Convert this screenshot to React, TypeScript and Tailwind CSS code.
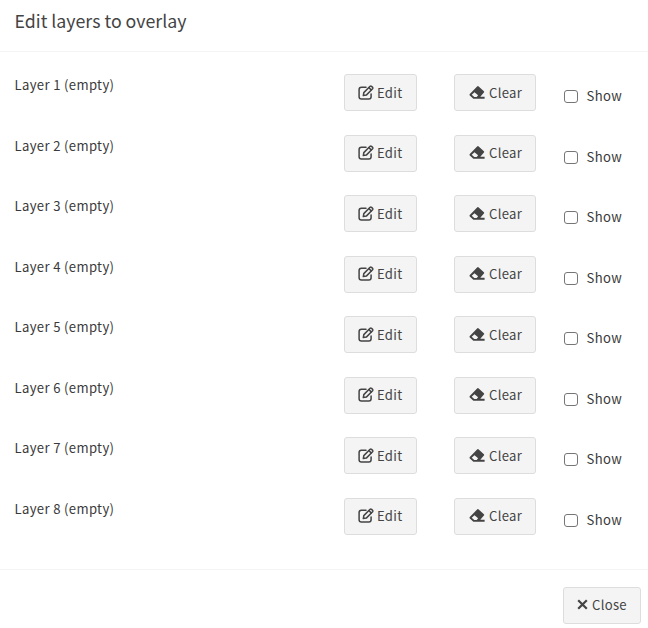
import React from "react";

const layers = [1, 2, 3, 4, 5, 6, 7, 8];

function EditIcon() {
  return (
    <svg viewBox="0 0 16 16" className="h-4 w-4 shrink-0" fill="none" stroke="currentColor" strokeWidth="1.5" strokeLinejoin="round" strokeLinecap="round">
      <path d="M8 2.3H3.4Q1.1 2.3 1.1 4.6V11.8Q1.1 14.1 3.4 14.1H10.8Q13.1 14.1 13.1 11.8V9" />
      <path d="M5.3 10.6L5.8 7.6L12.1 1.3Q12.8.8 13.5 1.3L14.6 2.4Q15.1 3.1 14.6 3.8L8.3 10.1Z" />
      <path d="M11 2.7L13.2 4.9" />
    </svg>
  );
}

function EraserIcon() {
  return (
    <svg viewBox="0 0 16 16" className="h-4 w-4 shrink-0" fill="currentColor">
      <path fillRule="evenodd" d="M8.1 1.4Q8.9.8 9.7 1.4L14.9 6.2Q15.6 6.9 14.9 7.6L11.3 11.7H15.6V13.8H4.4L.8 10.4Q.1 9.7.8 9ZM5.3 11.9H7.7L9.1 10.3L5.5 7.2L2.7 9.7Z" />
    </svg>
  );
}

function CloseIcon() {
  return (
    <svg viewBox="0 0 11 11" className="h-[11px] w-[11px] shrink-0" fill="none" stroke="currentColor" strokeWidth="2.2">
      <path d="M1.2 1.2L9.8 9.8M9.8 1.2L1.2 9.8" />
    </svg>
  );
}

const button =
  "flex h-[37px] items-center rounded-[3px] border border-[#ddd] bg-[#f4f4f4] tracking-[0.3px] text-[#444]";

export default function App() {
  return (
    <div className="h-[628px] w-[648px] overflow-hidden bg-white font-['Noto_Sans_CJK_SC',sans-serif] text-[13.1px] leading-5 tracking-[0.35px] text-[#3a3a3a]">
      <header className="h-[52px] border-b border-[#f4f4f4] pl-[14.5px] pt-[10px]">
        <h4 className="text-[17.75px] leading-5 tracking-normal text-[#444]">Edit layers to overlay</h4>
      </header>
      <main className="h-[517px] pt-[22px]">
        {layers.map((n) => (
          <div key={n} className="flex h-[60.5px] items-start">
            <div className="w-[344px] pl-[14.5px] pt-[1px]">Layer {n} (empty)</div>
            <button className={`${button} w-[73px] gap-[3px] pl-[13px]`}>
              <EditIcon />
              <span>Edit</span>
            </button>
            <button className={`${button} ml-[37px] w-[82px] gap-[4px] pl-[14px]`}>
              <EraserIcon />
              <span>Clear</span>
            </button>
            <label className="ml-[28px] mt-[12px] flex items-start gap-[8.5px]">
              <input type="checkbox" className="m-0 mt-[4px] h-[13px] w-[14px] appearance-none rounded-[3px] border border-[#767676] bg-white" />
              <span>Show</span>
            </label>
          </div>
        ))}
      </main>
      <footer className="flex h-[59px] justify-end border-t border-[#f4f4f4] pr-[7px] pt-[17px]">
        <button className={`${button} w-[78px] gap-[4px] pb-[2px] pl-[13px]`}>
          <CloseIcon />
          <span>Close</span>
        </button>
      </footer>
    </div>
  );
}
